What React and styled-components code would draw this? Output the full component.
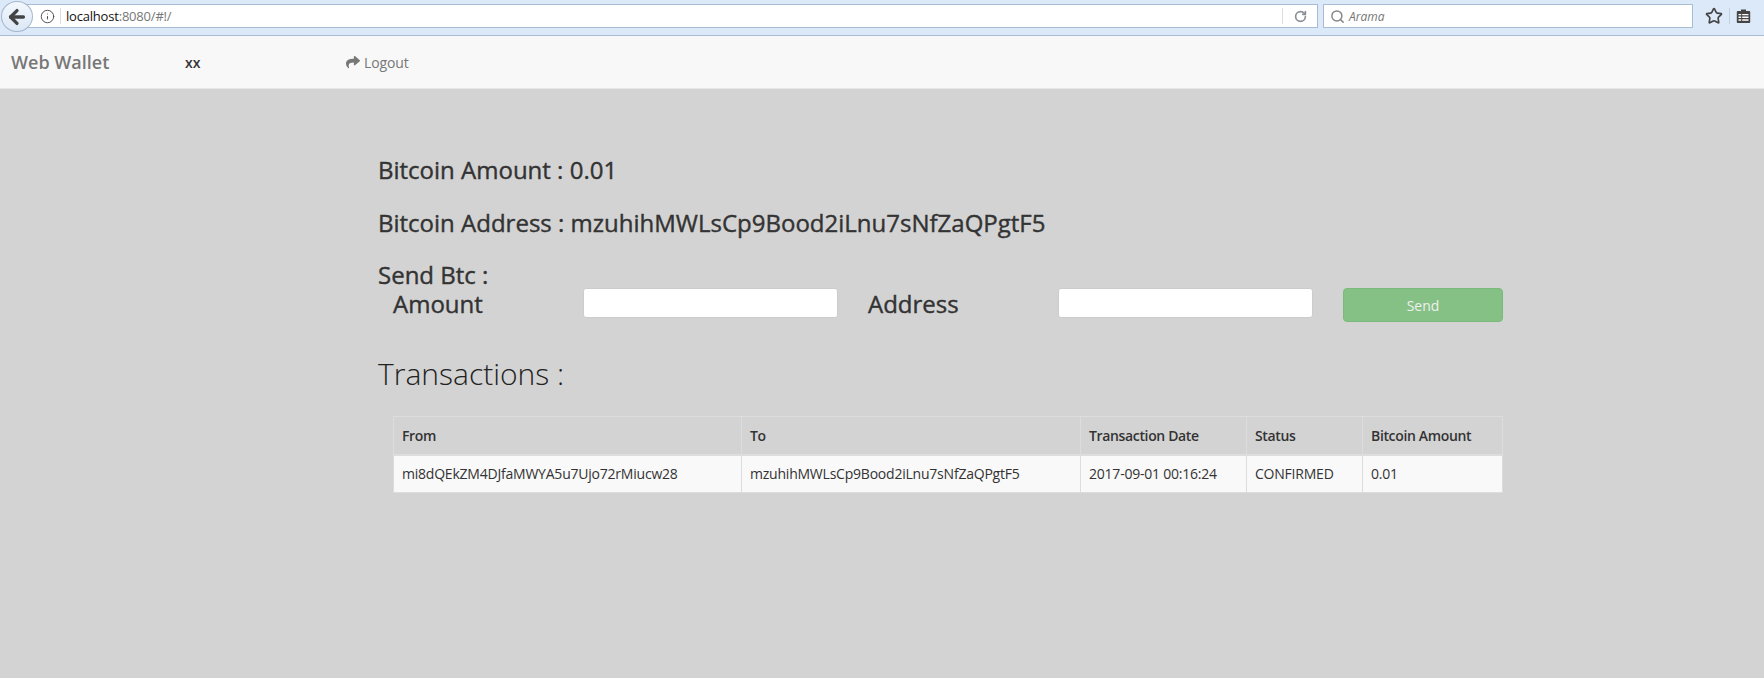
import styled, {createGlobalStyle} from 'styled-components'
import {ArrowLeft, Info, RotateCw, Search, Star} from 'lucide-react'
import {FaShare} from 'react-icons/fa'

const GlobalStyle = createGlobalStyle`
  html, body {
    margin: 0;
    height: 100%;
    background: #d3d3d3;
    color: #333;
    font-family: "Open Sans", "Liberation Sans", sans-serif;
  }
  * { box-sizing: border-box; }
`

const transactions = [
  {
    from: 'mi8dQEkZM4DJfaMWYA5u7Ujo72rMiucw28',
    to: 'mzuhihMWLsCp9Bood2iLnu7sNfZaQPgtF5',
    date: '2017-09-01 00:16:24',
    status: 'CONFIRMED',
    amount: '0.01',
  },
]

export default function App() {
  return (
    <>
      <GlobalStyle />
      <Chrome>
        <BackButton><ArrowLeft size={22} strokeWidth={3.6} color="#444" /></BackButton>
        <UrlBar>
          <Info size={15} color="#555" strokeWidth={1.6} />
          <UrlDivider />
          <UrlText>localhost<span>:8080/#!/</span></UrlText>
          <ReloadBox><RotateCw size={13} color="#8a8f96" strokeWidth={3} /></ReloadBox>
        </UrlBar>
        <SearchBar>
          <Search size={15} color="#888" strokeWidth={2.4} />
          <em>Arama</em>
        </SearchBar>
        <ChromeIcons>
          <Star size={18} color="#444" strokeWidth={2.2} />
          <IconDivider />
          <svg width="15" height="16" viewBox="0 0 15 16">
            <path d="M5 3V1.5h5V3h3.2a1 1 0 0 1 1 1v10a1 1 0 0 1-1 1H1.8a1 1 0 0 1-1-1V4a1 1 0 0 1 1-1z" fill="#444" />
            <path d="M2.5 6h10v1.3h-10zM2.5 8.6h10v1.3h-10zM2.5 11.2h10v1.6h-10z" fill="#fff" />
            <path d="M5.2 6h1v7h-1z" fill="#444" />
          </svg>
        </ChromeIcons>
      </Chrome>

      <Navbar>
        <Brand>Web Wallet</Brand>
        <UserName>xx</UserName>
        <LogoutLink><FaShare size={14} />Logout</LogoutLink>
      </Navbar>

      <Main>
        <InfoLine>Bitcoin Amount : 0.01</InfoLine>
        <InfoLine>Bitcoin Address : mzuhihMWLsCp9Bood2iLnu7sNfZaQPgtF5</InfoLine>
        <SendTitle>Send Btc :</SendTitle>
        <SendRow>
          <FieldLabel>Amount</FieldLabel>
          <TextInput />
          <FieldLabel>Address</FieldLabel>
          <TextInput />
          <SendButton>Send</SendButton>
        </SendRow>
        <SectionTitle>Transactions :</SectionTitle>
        <Table>
          <thead>
            <tr>
              <th style={{width: 348}}>From</th>
              <th style={{width: 339}}>To</th>
              <th style={{width: 166}}>Transaction Date</th>
              <th style={{width: 116}}>Status</th>
              <th>Bitcoin Amount</th>
            </tr>
          </thead>
          <tbody>
            {transactions.map(t => (
              <tr key={t.from}>
                <td>{t.from}</td>
                <td>{t.to}</td>
                <td>{t.date}</td>
                <td>{t.status}</td>
                <td>{t.amount}</td>
              </tr>
            ))}
          </tbody>
        </Table>
      </Main>
    </>
  )
}

const Chrome = styled.div`
  height: 36px;
  position: relative;
  display: flex;
  align-items: flex-start;
  padding: 4px 10px 0 17px;
  gap: 5px;
  background: #dbe9f9;
  border-bottom: 1px solid #a9bcd3;
`

const BackButton = styled.div`
  position: absolute;
  top: 1px;
  left: 1px;
  width: 32px;
  height: 31px;
  display: flex;
  align-items: center;
  justify-content: center;
  border-radius: 50%;
  background: linear-gradient(#f4f8fd, #dbe7f5);
  border: 1px solid #a5b7cf;
`

const UrlBar = styled.div`
  width: 1301px;
  height: 24px;
  display: flex;
  align-items: center;
  padding-left: 22px;
  background: #fff;
  border: 1px solid #a9bcd3;
`

const UrlDivider = styled.div`
  width: 1px;
  height: 16px;
  margin: 0 5px 0 5px;
  background: #ddd;
`

const UrlText = styled.div`
  flex: 1;
  font-size: 13px;
  letter-spacing: -0.2px;
  color: #111;
  span { color: #777; }
`

const ReloadBox = styled.div`
  width: 35px;
  height: 16px;
  display: flex;
  align-items: center;
  justify-content: center;
  border-left: 1px solid #ddd;
`

const SearchBar = styled.div`
  width: 370px;
  height: 24px;
  display: flex;
  align-items: center;
  gap: 4px;
  padding-left: 6px;
  background: #fff;
  border: 1px solid #a9bcd3;
  em {
    font-size: 12px;
    color: #777;
  }
`

const ChromeIcons = styled.div`
  display: flex;
  align-items: center;
  gap: 6px;
  height: 24px;
  margin-left: 7px;
`

const IconDivider = styled.div`
  width: 1px;
  height: 16px;
  background: #c4d0df;
`

const Navbar = styled.nav`
  height: 53px;
  display: flex;
  align-items: center;
  background: #f8f8f8;
  border-bottom: 1px solid #e7e7e7;
`

const Brand = styled.div`
  width: 185px;
  padding-left: 11px;
  font-size: 18px;
  font-weight: 600;
  color: #777;
`

const UserName = styled.div`
  width: 161px;
  font-size: 14px;
  font-weight: 600;
  color: #333;
`

const LogoutLink = styled.a`
  display: flex;
  align-items: center;
  gap: 4px;
  font-size: 14px;
  letter-spacing: -0.1px;
  color: #777;
`

const Main = styled.main`
  padding: 64px 261px 0 378px;
`

const InfoLine = styled.h3`
  margin: 0 0 20px;
  height: 33px;
  line-height: 33px;
  font-size: 24px;
  font-weight: 400;
  -webkit-text-stroke: 0.4px #333;
  color: #333;
`

const SendTitle = styled(InfoLine)`
  margin: 0;
  height: 25px;
  line-height: 31px;
`

const SendRow = styled.div`
  display: grid;
  grid-template-columns: 190px 255px 30px 190px 255px 30px 160px;
  align-items: center;
  padding-left: 15px;
  height: 30px;
`

const FieldLabel = styled.label`
  font-size: 24px;
  font-weight: 400;
  -webkit-text-stroke: 0.4px #333;
  color: #333;
  line-height: 33px;
  &:nth-of-type(2) { grid-column: 4; }
`

const TextInput = styled.input`
  height: 30px;
  width: 100%;
  background: #fff;
  border: 1px solid #ccc;
  border-radius: 3px;
  &:nth-of-type(2) { grid-column: 5; }
`

const SendButton = styled.button`
  grid-column: 7;
  height: 34px;
  margin-top: 4px;
  color: #fff;
  font-family: inherit;
  font-size: 14px;
  opacity: 0.65;
  background: #5cb85c;
  border: 1px solid #4cae4c;
  border-radius: 4px;
`

const SectionTitle = styled.h2`
  margin: 38px 0 0;
  height: 43px;
  line-height: 43px;
  font-size: 30px;
  font-weight: 300;
  color: #222;
`

const Table = styled.table`
  width: 1110px;
  margin: 21px 0 0 15px;
  table-layout: fixed;
  border-collapse: collapse;
  font-size: 14px;
  letter-spacing: -0.22px;
  color: #333;
  th, td {
    height: 38px;
    padding: 8px;
    text-align: left;
    border: 1px solid #ddd;
    white-space: nowrap;
  }
  th {
    font-weight: 600;
    letter-spacing: -0.35px;
    border-bottom-width: 2px;
  }
  td { background: #f9f9f9; }
`
